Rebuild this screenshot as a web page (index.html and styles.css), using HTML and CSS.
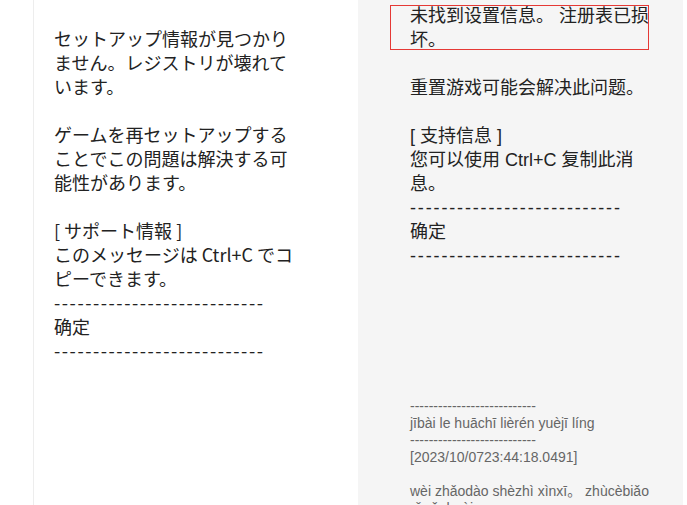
FILE: index.html
```html
<!DOCTYPE html>
<html>

<head>
	<meta charset="UTF-8">
	<title>翻訳</title>
	<link rel="stylesheet" href="styles.css">
</head>

<body>
	<div class="page">
		<div class="source">
			<div class="text text-ja">
				<p>セットアップ情報が見つかりません。レジストリが壊れています。</p>
				<p>ゲームを再セットアップすることでこの問題は解決する可能性があります。</p>
				<div class="line">[ サポート情報 ]</div>
				<div class="line">このメッセージは Ctrl+C でコピーできます。</div>
				<div class="rule">---------------------------</div>
				<div class="line">确定</div>
				<div class="rule">---------------------------</div>
			</div>
		</div>

		<div class="target">
			<div class="highlight"></div>
			<div class="text text-zh">
				<p>未找到设置信息。 注册表已损坏。</p>
				<p>重置游戏可能会解决此问题。</p>
				<div class="line">[ 支持信息 ]</div>
				<div class="line">您可以使用 Ctrl+C 复制此消息。</div>
				<div class="rule">---------------------------</div>
				<div class="line">确定</div>
				<div class="rule">---------------------------</div>
			</div>

			<div class="pinyin">
				<div>---------------------------</div>
				<div>jībài le huāchī lièrén yuèjī líng</div>
				<div>---------------------------</div>
				<p>[2023/10/0723:44:18.0491]</p>
				<p>wèi zhǎodào shèzhì xìnxī。 zhùcèbiǎo yǐ sǔnhuài.</p>
			</div>
		</div>
	</div>
</body>

</html>
```

FILE: styles.css
```css
body {
	margin: 0;
	padding: 0;
	background-color: #fff;
	color: #222;
	font-family: "Noto Sans CJK SC", sans-serif;
}

.page {
	display: flex;
	height: 505px;
	padding-left: 33px;
	overflow: hidden;
}

.source {
	width: 325px;
	box-sizing: border-box;
	border-left: 1px solid #ededed;
	padding: 26px 0 0 20px;
}

.target {
	position: relative;
	width: 325px;
	box-sizing: border-box;
	background-color: #f5f5f5;
	padding: 4px 0 0 52px;
}

.text {
	font-size: 18px;
	line-height: 24px;
}

.text p {
	margin: 0 0 24px 0;
}

.text-ja {
	width: 250px;
	font-family: "Noto Sans CJK JP", sans-serif;
}

.text-ja .rule {
	letter-spacing: 1.55px;
}

.text-zh {
	width: 240px;
	font-family: "Liberation Sans", "Noto Sans CJK SC", sans-serif;
}

.rule {
	letter-spacing: 1.85px;
	white-space: nowrap;
}

.highlight {
	position: absolute;
	left: 32px;
	top: 5px;
	width: 257px;
	height: 43px;
	border: 1px solid #e53935;
}

.pinyin {
	width: 240px;
	margin-top: 130px;
	font-family: "Liberation Sans", "Noto Sans CJK SC", sans-serif;
	font-size: 14px;
	line-height: 17px;
	color: #666;
}

.pinyin p {
	margin: 0 0 17px 0;
}
```
